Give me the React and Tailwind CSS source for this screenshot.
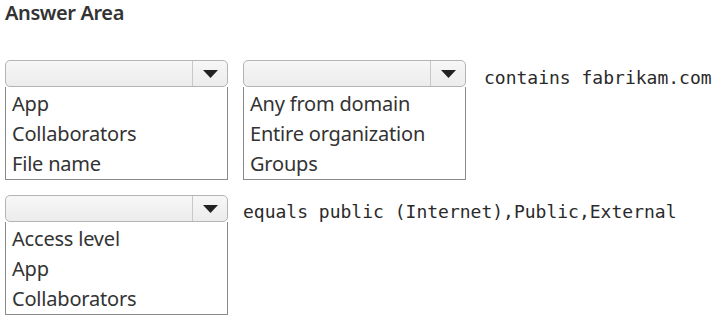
export default function App() {
  const Dropdown = ({ items }) => (
    <div className="flex flex-col w-[223px]">
      <div className="flex h-[27px] rounded-[5px] border border-[#b4b4b4] bg-[linear-gradient(#f7f7f7,#ececec)]">
        <div className="flex-1 border-r border-[#c8c8c8]" />
        <div className="w-[34px] flex items-center justify-center">
          <svg width="15" height="8" viewBox="0 0 15 8">
            <path d="M0 0 L15 0 L7.5 8 Z" fill="#222" />
          </svg>
        </div>
      </div>
      <div className="flex flex-col h-[93px] border border-t-0 border-[#8a8a8a] bg-white pl-[6px] pt-[2px]">
        {items.map(item => (
          <div key={item} className="h-[30px] leading-[30px] text-[20px] text-[#333] tracking-[-0.2px]">{item}</div>
        ))}
      </div>
    </div>
  )

  return (
    <div className="w-[717px] h-[331px] bg-white font-['Noto_Sans',sans-serif] px-[5px] select-none">
      <div className="text-[20px] font-semibold text-[#333] tracking-[-0.4px] leading-[26px]">Answer Area</div>

      <div className="flex items-start gap-[15px] mt-[34px]">
        <Dropdown items={['App', 'Collaborators', 'File name']} />
        <div className="flex items-start gap-[18px]">
          <Dropdown items={['Any from domain', 'Entire organization', 'Groups']} />
          <span className="mt-[6px] font-['DejaVu_Sans_Mono',monospace] text-[18px] text-[#2a2a2a] leading-[24px]">
            contains fabrikam.com
          </span>
        </div>
      </div>

      <div className="flex items-start gap-[15px] mt-[15px]">
        <Dropdown items={['Access level', 'App', 'Collaborators']} />
        <span className="mt-[5px] font-['DejaVu_Sans_Mono',monospace] text-[18px] text-[#2a2a2a] leading-[24px]">
          equals public (Internet),Public,External
        </span>
      </div>
    </div>
  )
}
